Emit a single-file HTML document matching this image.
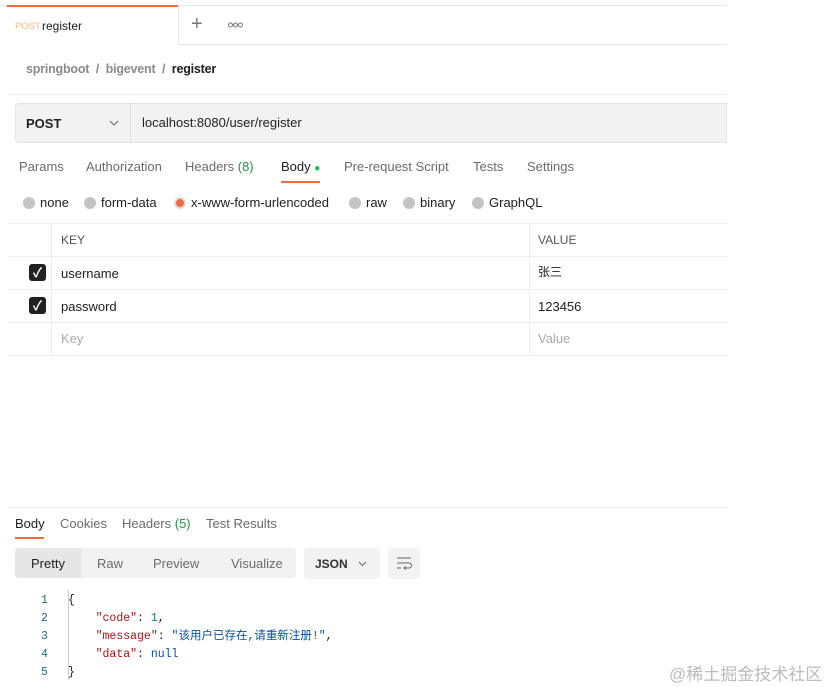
<!DOCTYPE html>
<html><head><meta charset="utf-8"><style>
*{margin:0;padding:0;box-sizing:border-box}
body{width:831px;height:687px;background:#fff;font-family:"Liberation Sans","Noto Sans CJK SC",sans-serif;position:relative;overflow:hidden;color:#212121;font-size:13px}
.a{position:absolute;white-space:nowrap}
.g{color:#6b6b6b}
.mono{font-family:"Liberation Mono","Noto Sans CJK SC",monospace;font-size:11.5px}
.rad{position:absolute;width:12px;height:12px;border-radius:50%;background:#c4c4c4;top:197px}
.cb{position:absolute;left:29px;width:17px;height:17px;background:#212121;border-radius:3px;color:#fff;font-size:13px;text-align:center;line-height:17px;font-weight:bold}
</style></head><body>
<div class="a" style="left:0;top:5px;width:727px;height:1px;background:#e6e6e6"></div>
<div class="a" style="left:7px;top:5px;width:171px;height:2px;background:#f26b3a"></div>
<div class="a" style="left:178px;top:6px;width:549px;height:39px;border-left:1px solid #e6e6e6;border-bottom:1px solid #e6e6e6;background:#fff"></div>
<div class="a" style="left:15px;top:21px;font-size:9.5px;color:#f5b880">POST</div>
<div class="a" style="left:42px;top:19px;font-size:12px">register</div>
<div class="a" style="left:191px;top:13px;font-size:20px;color:#777;font-weight:300">+</div>
<svg class="a" style="left:228px;top:22px" width="15" height="6"><circle cx="2.5" cy="3" r="2" fill="none" stroke="#777"/><circle cx="7.5" cy="3" r="2" fill="none" stroke="#777"/><circle cx="12.5" cy="3" r="2" fill="none" stroke="#777"/></svg>
<div class="a" style="left:26px;top:62px;font-size:12.5px;color:#8a8a8a;font-weight:bold;letter-spacing:-0.2px">springboot &nbsp;/&nbsp; bigevent &nbsp;/&nbsp; <span style="color:#212121">register</span></div>
<div class="a" style="left:8px;top:94px;width:719px;height:1px;background:#ebebeb"></div>
<div class="a" style="left:15px;top:103px;width:712px;height:40px;background:#f2f2f2;border:1px solid #e3e3e3;border-radius:4px 0 0 4px"></div>
<div class="a" style="left:130px;top:103px;width:1px;height:40px;background:#dedede"></div>
<div class="a" style="left:26px;top:116px;font-weight:bold;font-size:13px">POST</div>
<svg class="a" style="left:109px;top:120px" width="10" height="6"><path d="M1 1l4 4 4-4" stroke="#666" fill="none"/></svg>
<div class="a" style="left:142px;top:115px;font-size:13px">localhost:8080/user/register</div>
<div class="a g" style="left:19px;top:159px">Params</div>
<div class="a g" style="left:86px;top:159px">Authorization</div>
<div class="a g" style="left:185px;top:159px">Headers <span style="color:#2f8a4f">(8)</span></div>
<div class="a" style="left:281px;top:159px">Body <span style="color:#0cbb52;font-size:10px">●</span></div>
<div class="a" style="left:281px;top:181px;width:39px;height:2px;background:#f26b3a"></div>
<div class="a g" style="left:344px;top:159px">Pre-request Script</div>
<div class="a g" style="left:473px;top:159px">Tests</div>
<div class="a g" style="left:527px;top:159px">Settings</div>
<div class="rad" style="left:23px"></div><div class="a" style="left:40px;top:195px">none</div>
<div class="rad" style="left:84px"></div><div class="a" style="left:101px;top:195px">form-data</div>
<div class="rad" style="left:174px;background:#f26b3a;border:2px solid #ddd"></div><div class="a" style="left:191px;top:195px">x-www-form-urlencoded</div>
<div class="rad" style="left:349px"></div><div class="a" style="left:366px;top:195px">raw</div>
<div class="rad" style="left:403px"></div><div class="a" style="left:420px;top:195px">binary</div>
<div class="rad" style="left:472px"></div><div class="a" style="left:489px;top:195px">GraphQL</div>
<div class="a" style="left:8px;top:223px;width:719px;height:1px;background:#ededed"></div>
<div class="a" style="left:8px;top:256px;width:719px;height:1px;background:#ededed"></div>
<div class="a" style="left:8px;top:289px;width:719px;height:1px;background:#ededed"></div>
<div class="a" style="left:8px;top:322px;width:719px;height:1px;background:#ededed"></div>
<div class="a" style="left:8px;top:355px;width:719px;height:1px;background:#ededed"></div>
<div class="a" style="left:51px;top:223px;width:1px;height:132px;background:#ededed"></div>
<div class="a" style="left:529px;top:223px;width:1px;height:132px;background:#ededed"></div>
<div class="a" style="left:61px;top:233px;font-size:12px;color:#555">KEY</div>
<div class="a" style="left:538px;top:233px;font-size:12px;color:#555">VALUE</div>
<div class="cb" style="top:264px">✓</div><div class="a" style="left:61px;top:266px">username</div><div class="a" style="left:538px;top:263px;font-size:12px">张三</div>
<div class="cb" style="top:297px">✓</div><div class="a" style="left:61px;top:299px">password</div><div class="a" style="left:538px;top:299px">123456</div>
<div class="a" style="left:61px;top:331px;color:#aaa">Key</div><div class="a" style="left:538px;top:331px;color:#aaa">Value</div>
<div class="a" style="left:8px;top:507px;width:719px;height:1px;background:#ededed"></div>
<div class="a" style="left:15px;top:516px">Body</div>
<div class="a" style="left:15px;top:537px;width:29px;height:2px;background:#f26b3a"></div>
<div class="a g" style="left:60px;top:516px">Cookies</div>
<div class="a g" style="left:122px;top:516px">Headers <span style="color:#2f8a4f">(5)</span></div>
<div class="a g" style="left:206px;top:516px">Test Results</div>
<div class="a" style="left:15px;top:548px;width:281px;height:30px;background:#f2f2f2;border-radius:4px"></div>
<div class="a" style="left:15px;top:548px;width:66px;height:30px;background:#e6e6e6;border-radius:4px 0 0 4px"></div>
<div class="a" style="left:31px;top:556px">Pretty</div>
<div class="a g" style="left:97px;top:556px">Raw</div>
<div class="a g" style="left:153px;top:556px">Preview</div>
<div class="a g" style="left:231px;top:556px">Visualize</div>
<div class="a" style="left:304px;top:548px;width:76px;height:31px;background:#f2f2f2;border-radius:4px"></div>
<div class="a" style="left:315px;top:557px;font-weight:bold;font-size:12px;color:#333">JSON</div>
<svg class="a" style="left:358px;top:561px" width="9" height="6"><path d="M1 1l3.5 3.5L8 1" stroke="#666" fill="none"/></svg>
<div class="a" style="left:388px;top:548px;width:32px;height:31px;background:#f2f2f2;border-radius:4px"></div>
<svg class="a" style="left:396px;top:556px" width="16" height="14" viewBox="0 0 16 14"><path d="M1 2h14M1 7h12a2.5 2.5 0 0 1 0 5H8M1 12h4M9.5 10.5 8 12l1.5 1.5" stroke="#666" fill="none" stroke-width="1"/></svg>
<div class="a" style="left:68px;top:590px;width:6px;height:90px;border-left:1px solid #ccc"></div>
<div class="a mono" style="left:41px;top:592px;color:#1f6f7a;line-height:18px">1<br>2<br>3<br>4<br>5</div>
<div class="a mono" style="left:68px;top:592px;line-height:18px;color:#212121">{<br>&nbsp;&nbsp;&nbsp;&nbsp;<span style="color:#a31515">"code"</span>: <span style="color:#098658">1</span>,<br>&nbsp;&nbsp;&nbsp;&nbsp;<span style="color:#a31515">"message"</span>: <span style="color:#0451a5">"该用户已存在,请重新注册!"</span>,<br>&nbsp;&nbsp;&nbsp;&nbsp;<span style="color:#a31515">"data"</span>: <span style="color:#0451a5">null</span><br>}</div>
<div class="a" style="left:669px;top:660px;font-size:17px;color:#bbb">@稀土掘金技术社区</div>
</body></html>
